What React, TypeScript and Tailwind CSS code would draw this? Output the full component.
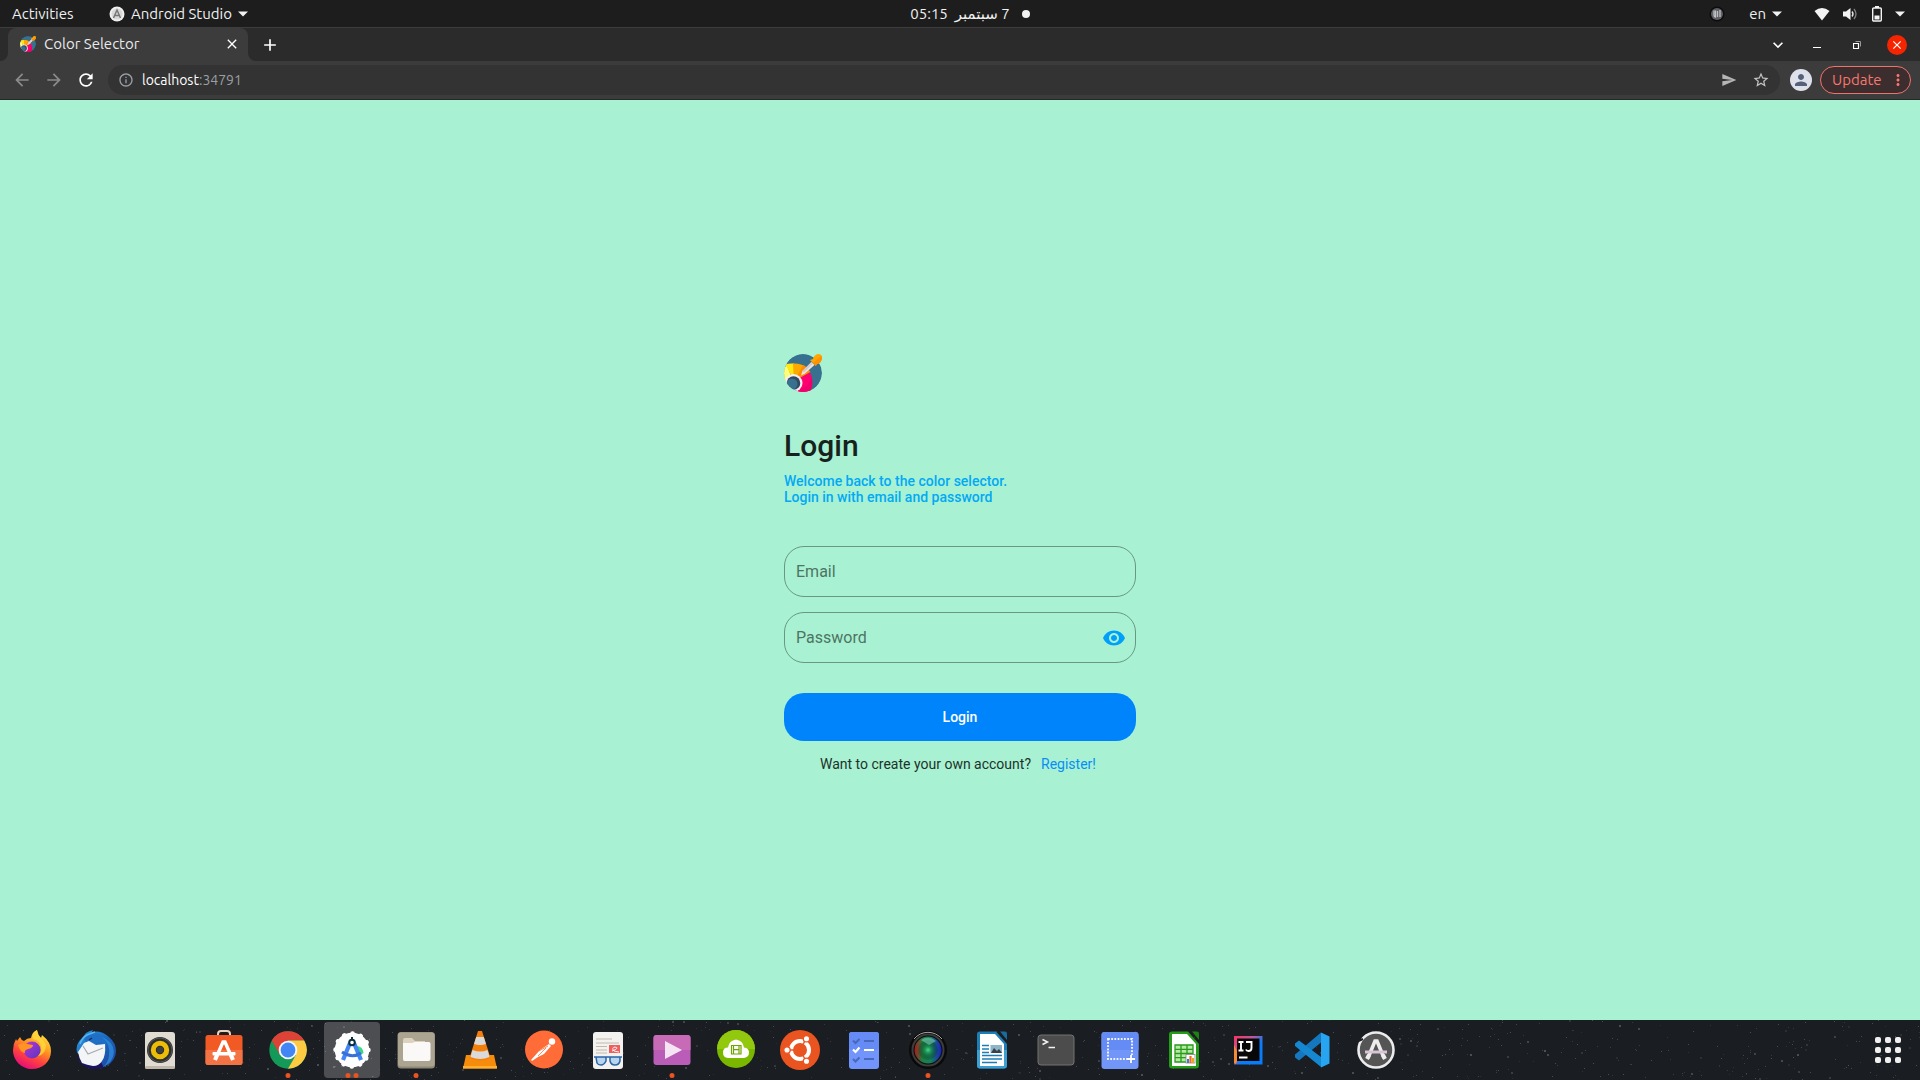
import React from "react";
import { MdArrowBack, MdArrowForward, MdRefresh, MdSend, MdStarBorder, MdInfoOutline, MdClose, MdAdd, MdPerson, MdVisibility, MdKeyboardArrowDown, MdMoreVert } from "react-icons/md";

const uiFont = "font-['Ubuntu','Noto_Sans','DejaVu_Sans',sans-serif]";

function Caret() {
  return (
    <svg viewBox="0 0 10 6" className="h-[6px] w-[10px]" aria-hidden="true">
      <path d="M0 .5h10L5 5.5z" fill="#f2f2f2" />
    </svg>
  );
}

function ColorLogo({ className }: { className: string }) {
  return (
    <svg viewBox="0 0 38 38" className={className} aria-hidden="true">
      <defs>
        <clipPath id="logo-disc"><circle cx="19" cy="19" r="19" /></clipPath>
      </defs>
      <g clipPath="url(#logo-disc)">
        <circle cx="19" cy="19" r="19" fill="#38718f" />
        <path d="M-2 20Q0 14 3 10.500L9 28-2 32z" fill="#fdfd7c" />
        <path d="M1.500 10.500Q5 9 10 9.500V27z" fill="#ffe816" />
        <path d="M9 9.500Q17 9 22 13L10 28z" fill="#ffa800" />
        <path d="M19 11q4 2 7.500 7L10 28z" fill="#ff8c00" />
        <path d="M26 18.500C30 26 28 34 26 38H10V27z" fill="#ff0071" />
        <path d="M27.500 23C29 30 28 34 26 38H12l2-3q10 0 13.500-12z" fill="#f0006b" />
        <circle cx="9.500" cy="29" r="9" fill="#f4f0ef" />
        <circle cx="9.500" cy="29" r="6.800" fill="#33475f" />
        <circle cx="8" cy="30" r="5.500" fill="#38718f" />
      </g>
      <path d="M17 21.500 18.500 17 27.500 8l3 3-9.500 8.500z" fill="#e8e3e4" />
      <path d="m18.500 17 9-9 1.500 1.500-9 9z" fill="#d3c8ca" />
      <path d="m26 6 3-1q1.500-5 6-5 4 1 3 5-1 4-5 5l-1 2z" fill="#ffa700" />
      <path d="m29 9 8-7q2 2 0 5-1 3-5 3.500L31.500 12z" fill="#ff9100" />
    </svg>
  );
}

function TopBar() {
  return (
    <header className="grid h-7 grid-cols-[1fr_auto_1fr] items-center border-b border-[#3d3d3d] bg-[#1d1d1d] text-[15px] leading-5 text-[#f0f0f0]">
      <div className="flex items-center pl-3">
        <button className="w-[97px] text-left">Activities</button>
        <button className="flex items-center gap-1.5">
          <svg viewBox="0 0 16 16" className="size-4" aria-hidden="true">
            <circle cx="8" cy="8" r="7.500" fill="#f0f0f0" />
            <circle cx="8" cy="8" r="5.500" fill="#d8d8d8" />
            <path d="m4.500 12 3.500-8 3.500 8M5 9.500h6" fill="none" stroke="#777" strokeWidth="1.500" />
          </svg>
          <span>Android Studio</span>
          <Caret />
        </button>
      </div>
      <button className="flex items-center gap-3 pl-5">
        <span dir="rtl" className="whitespace-pre">7 سبتمبر  05:15</span>
        <span className="size-2 rounded-full bg-[#f2f2f2]" />
      </button>
      <div className="flex items-center justify-end pr-[15px]">
        <svg viewBox="0 0 16 16" className="mr-6 size-4" aria-hidden="true">
          <circle cx="8" cy="8" r="7.500" fill="#0c0c0e" />
          <circle cx="8" cy="8" r="6" fill="#5f6064" />
          <path d="M5 4.500v4.500q0 2 1.500 2V4.500M8.500 5v6M11 4v7" fill="none" stroke="#bfc0c3" strokeWidth="1.300" />
        </svg>
        <button className="mr-8 flex items-center gap-1.5">en <Caret /></button>
        <button className="flex items-center" aria-label="System menu">
          <svg viewBox="0 0 16 14" className="mr-3 h-3.5 w-4" aria-hidden="true"><path d="M8 13.500.5 4Q8-2 15.500 4z" fill="#f4f4f4" /></svg>
          <svg viewBox="0 0 16 16" className="mr-3.5 size-4" aria-hidden="true">
            <path d="M1 5.500h3L8.500 2v12L4 10.500H1z" fill="#f4f4f4" />
            <path d="M10 5.500q2 2.500 0 5" fill="none" stroke="#e6e6e6" strokeWidth="1.400" />
            <path d="M12 3q4 5 0 10" fill="none" stroke="#808080" strokeWidth="1.300" />
          </svg>
          <svg viewBox="0 0 10 16" className="mr-[13px] h-4 w-2.5" aria-hidden="true">
            <rect x="3" y="0" width="4" height="2" fill="#f4f4f4" />
            <rect x=".7" y="2" width="8.600" height="13" rx="1" fill="none" stroke="#f4f4f4" strokeWidth="1.400" />
            <rect x="2.500" y="9.500" width="5" height="4" fill="#f4f4f4" />
          </svg>
          <Caret />
        </button>
      </div>
    </header>
  );
}

function TabStrip() {
  return (
    <div className="flex h-[33px] items-center bg-[#2b2b2b] text-white">
      <div className="flex h-full w-2 items-end bg-[#3c3c3c]"><span className="h-full w-2 rounded-br-lg bg-[#2b2b2b]" /></div>
      <div className="flex h-full w-60 items-center rounded-t-lg bg-[#3c3c3c] pr-2 pb-px pl-3">
        <ColorLogo className="size-4" />
        <span className="ml-2 flex-1 text-[15px] leading-5 text-[#e9eaec]">Color Selector</span>
        <button aria-label="Close tab"><MdClose className="size-4" /></button>
      </div>
      <div className="h-full w-2 bg-[#3c3c3c]"><div className="size-full rounded-bl-lg bg-[#2b2b2b]" /></div>
      <button className="ml-1" aria-label="New tab"><MdAdd className="size-5" /></button>
      <div className="ml-auto flex items-center pr-[13px]">
        <button className="mr-[25px]" aria-label="Search tabs"><MdKeyboardArrowDown className="size-5" /></button>
        <button className="mr-8 flex h-5 items-center" aria-label="Minimize"><span className="mt-[5px] h-px w-2 bg-white" /></button>
        <button className="mr-[26px]" aria-label="Restore">
          <svg viewBox="0 0 8 8" className="size-2" fill="none" aria-hidden="true">
            <path d="M2.500.5h5v5" stroke="#999" />
            <path d="M.5 2.500h5v5h-5z" stroke="#fff" strokeWidth="1.200" />
          </svg>
        </button>
        <button className="grid size-5 place-items-center rounded-full bg-[#f52502]" aria-label="Close window"><MdClose className="size-3.5" /></button>
      </div>
    </div>
  );
}

function Toolbar() {
  return (
    <div className="flex h-[39px] items-center border-b border-[#262626] bg-[#3c3c3c] pr-[9px] pl-3">
      <button className="mr-3" aria-label="Back"><MdArrowBack className="size-5 text-[#8b8b8b]" /></button>
      <button className="mr-3" aria-label="Forward"><MdArrowForward className="size-5 text-[#8b8b8b]" /></button>
      <button className="mr-3" aria-label="Reload"><MdRefresh className="size-5 text-white" /></button>
      <div className="flex h-[30px] flex-1 items-center rounded-full bg-[#333333] px-2.5">
        <MdInfoOutline className="mr-2 size-4 text-[#9aa0a6]" />
        <a href="#address" className="flex-1 text-[14px] leading-5 text-[#9a9fa3]"><span className="text-white">localhost</span>:34791</a>
        <button className="mr-[15px]" aria-label="Share"><MdSend className="size-4 text-[#b5b5b5]" /></button>
        <button aria-label="Bookmark"><MdStarBorder className="size-[18px] text-[#c4c4c4]" /></button>
      </div>
      <button className="mr-2 ml-[10px] grid size-[22px] place-items-center rounded-full bg-[#dee1e9]" aria-label="Profile"><MdPerson className="size-[18px] text-[#566078]" /></button>
      <button className="flex h-7 w-[91px] items-center justify-between rounded-full border border-[#f0736b] bg-[#3c2e2e] pr-[3px] pl-[11px] text-[15px] leading-5 text-[#f6786f]">
        Update <MdMoreVert className="size-[18px]" />
      </button>
    </div>
  );
}

function LoginForm() {
  const field = "flex h-[51px] items-center rounded-[20px] border border-[#699782] pl-[11px]";
  const input = "min-w-0 flex-1 bg-transparent text-[16px] leading-5 outline-none placeholder:text-[#4e7463] placeholder:opacity-100";
  return (
    <form className="flex w-[352px] flex-col" onSubmit={(e) => e.preventDefault()}>
      <ColorLogo className="size-[38px]" />
      <h1 className="mt-9 text-[30px] leading-9 font-medium text-[#17221d]">Login</h1>
      <p className="mt-[9px] text-[14px] leading-4 font-medium text-[#03a9f4]">
        Welcome back to the color selector.<br />Login in with email and password
      </p>
      <label className={`mt-[41px] ${field}`}>
        <input type="email" placeholder="Email" aria-label="Email" className={input} />
      </label>
      <div className={`mt-[15px] ${field} pr-[9px]`}>
        <input type="password" placeholder="Password" aria-label="Password" className={input} />
        <button type="button" aria-label="Show password"><MdVisibility className="size-6 text-[#00a0fa]" /></button>
      </div>
      <button type="submit" className="mt-[30px] h-12 rounded-[20px] bg-[#0084fb] text-[14px] leading-4 font-medium text-white">Login</button>
      <p className="mt-[15px] flex gap-2.5 pl-9 text-[14px] leading-4 text-[#1e3129]">
        <span>Want to create your own account?</span>
        <a href="#register" className="text-[#0a8df5]">Register!</a>
      </p>
    </form>
  );
}

const stars = Array.from({ length: 760 }, (_, i) => {
  const r = (n: number) => {
    const v = Math.sin(i * 12.9898 + n * 78.233) * 43758.5453;
    return v - Math.floor(v);
  };
  return { x: Math.floor(r(1) * 1920), y: Math.floor(r(2) * 60), s: r(3) > 0.85 ? 2 : 1, o: 0.12 + r(4) * 0.32 };
});

type App = { name: string; dots?: number; active?: boolean; art: React.ReactNode };

const apps: App[] = [
  { name: "Firefox", art: <>
    <defs>
      <linearGradient id="ff1" x1=".8" y1="0" x2=".3" y2="1"><stop offset="0" stopColor="#fff04a" /><stop offset=".4" stopColor="#ff9a1f" /><stop offset=".7" stopColor="#ff4040" /><stop offset="1" stopColor="#e5097f" /></linearGradient>
      <linearGradient id="ff2" x1="0" y1="0" x2="1" y2="1"><stop offset="0" stopColor="#b833e1" /><stop offset="1" stopColor="#5a36b8" /></linearGradient>
    </defs>
    <path d="M20 17q1 3 4 4 3-3 7-3Q32 12 37 10q1 5 4 8l1-3q9 7 9 16c0 11-9 18-19 18S13 41 13 30q0-6 3-11l1 2z" fill="url(#ff1)" />
    <circle cx="32" cy="30" r="8.500" fill="url(#ff2)" />
    <path d="M18 25q4-3 9-1l6 1q0 3-5 4-4 1-3 4-5-1-7-8z" fill="#ff9422" />
    <path d="M33 19q7 1 8 8 1 6-3 9 8-2 8-11-2-4-5-7-4-3-4-8-6 4-4 9z" fill="#ffd63b" opacity=".85" />
  </> },
  { name: "Thunderbird", art: <>
    <defs><linearGradient id="tb" x1="0" y1="0" x2="1" y2="1"><stop offset="0" stopColor="#2f9be0" /><stop offset=".5" stopColor="#1a67bd" /><stop offset="1" stopColor="#21409c" /></linearGradient></defs>
    <path d="M13 33q-2-9 5-15l4-5q3-2 7-3l-1 2q9-2 17 5 7 6 7 14 0 9-9 15l1-3q-3 4-8 6l1-2z" fill="url(#tb)" />
    <path d="M13 37q4 10 15 12l12-1-3-6z" fill="#1b1560" />
    <path d="M20 19q5-8 15-5 9 4 7 13l-5-5-13 2z" fill="#1f6fc6" />
    <path d="M38 17q9 7 7 19-1 7-6 11 10-4 11-15-1-11-12-15z" fill="#2e8bdb" opacity=".8" />
    <path d="M14 32 20 23l5-2 7 4 9-1q1 12-3 17-3 5-9 5-6-1-11-3-3-5-4-11z" fill="#f4f5f7" />
    <path d="m19 26 5 8 15-6" fill="none" stroke="#a9abb1" strokeWidth="1.200" />
    <path d="M16 24q2-6 7-9l8-3" fill="none" stroke="#55b4f0" strokeWidth="1.600" />
    <path d="m25 20 3-2" stroke="#142f68" strokeWidth="1.500" />
  </> },
  { name: "Rhythmbox", art: <>
    <rect x="17" y="12" width="30" height="37" rx="3" fill="#e0dcd1" />
    <rect x="17" y="46" width="30" height="3" rx="1.500" fill="#bdb8aa" />
    <circle cx="32" cy="30" r="13" fill="#2d2e30" /><circle cx="32" cy="30" r="12" fill="none" stroke="#666" strokeWidth=".7" />
    <circle cx="32" cy="30" r="6.700" fill="#252525" stroke="#ecbd08" strokeWidth="5" />
    <circle cx="32" cy="30" r="3.500" fill="#3d3d3d" />
  </> },
  { name: "Ubuntu Software", art: <>
    <path d="M26 16v-2q0-3 3-3h6q3 0 3 3v2" fill="none" stroke="#e9d3c0" strokeWidth="2" />
    <rect x="13.500" y="15" width="37" height="30" rx="2.500" fill="#f15a24" /><path d="M13.500 30h37v13q0 2-2.500 2H16q-2.500 0-2.500-2z" fill="#f47345" />
    <path d="m24 38 7-16h2l7 16" fill="none" stroke="#fff" strokeWidth="3.400" />
    <rect x="20.500" y="32" width="23" height="3.500" rx="1" fill="#fff" /><path d="m25 35-2 5M39 35l2 5" stroke="#fff" strokeWidth="4" />
  </> },
  { name: "Google Chrome", dots: 1, art: <>
    <circle cx="32" cy="30" r="18.700" fill="#159958" />
    <path d="M15.800 20.600A18.700 18.700 0 0 1 48.200 20.600H32L23.900 34.700z" fill="#dd4236" />
    <path d="M48.200 20.600A18.700 18.700 0 0 1 32 48.700L40.100 34.700 32 20.600z" fill="#fdcb42" />
    <circle cx="32" cy="30" r="9.300" fill="#f5f5f5" /><circle cx="32" cy="30" r="7.400" fill="#4285f4" />
  </> },
  { name: "Android Studio", dots: 2, active: true, art: <>
    <circle cx="32" cy="30" r="17.300" fill="#fff" />
    <circle cx="32" cy="30" r="16.500" fill="none" stroke="#fff" strokeWidth="4.500" strokeDasharray="0.100 8.540" strokeLinecap="round" />
    <path d="M36 26q7 0 7.500 7L37 37z" fill="#3bd884" />
    <path d="m30 23-7 17M34 23l7 17" stroke="#4285f4" strokeWidth="4.200" />
    <path d="M22 32q10 7 19 1" fill="none" stroke="#3871d4" strokeWidth="3" />
    <path d="M32 17v4" stroke="#073042" strokeWidth="2" /><circle cx="32" cy="22.500" r="2.800" fill="#fff" stroke="#073042" strokeWidth="2" />
  </> },
  { name: "Files", dots: 1, art: <>
    <rect x="13.500" y="12" width="37.500" height="36.500" rx="3.500" fill="#8f8877" /><rect x="14" y="12.500" width="36.500" height="34" rx="3" fill="#aaa490" />
    <path d="M19 20q0-2 2-2h7l3 3h10v8H19z" fill="#dcd2bd" />
    <path d="M19 23h9l3-1h14q1.500 0 1.500 2v15q0 2-2 2h-24q-1.500 0-1.500-2z" fill="#faf9f7" />
  </> },
  { name: "VLC", art: <>
    <path d="M18 35h28l3 13.500H15z" fill="#f68b0c" /><path d="M15 46h34v2.500H15z" fill="#ffb02e" />
    <path d="M30 11h4l8.500 27q-10 5-21 0z" fill="#f4800a" />
    <path d="M28.200 17h7.600l2.200 7q-6 2-12 0zM24.500 30q8 3 15 0l2 7q-9 4-19 0z" fill="#dadada" />
  </> },
  { name: "Postman", art: <>
    <circle cx="32" cy="29.500" r="19" fill="#ff6c37" />
    <circle cx="40" cy="21.500" r="3.200" fill="#fff" /><path d="m37 24 2 2-7 8-6 3-6 4-1-1 9-10z" fill="#fff" />
    <path d="m27 31 9-5M26 36l8-8" stroke="#ff6c37" strokeWidth=".8" />
  </> },
  { name: "Document Viewer", art: <>
    <rect x="17" y="12" width="30" height="37" rx="3" fill="#f4f2ef" /><path d="M20 19h16M20 23h23M20 26.500h11M20 30h11M20 33h11" stroke="#c0b9ac" />
    <rect x="33" y="25" width="11" height="8" fill="#ee5f5f" /><path d="M36 31q8-3 3-4-4 1-1 4l5 1" fill="none" stroke="#fff" strokeWidth=".9" />
    <path d="M18 37h28M20 37l1 6q1 2 4 2t5-4v-4M34 37v4q1 4 5 4 4 0 5-4v-4" fill="#b9d5ee" stroke="#2a64a8" strokeWidth="1.500" />
  </> },
  { name: "Videos", dots: 1, art: <>
    <rect x="13.500" y="15" width="37" height="30" rx="3" fill="#b95db9" /><path d="M13.500 30V18q0-3 3-3H47q3.500 0 3.500 3v12z" fill="#c76bb7" />
    <path d="m25 21 17 9-17 9z" fill="#f5e5f4" />
  </> },
  { name: "Video Downloader", art: <>
    <circle cx="32" cy="29" r="19" fill="#7ab800" /><path d="M13 29a19 19 0 0 1 38 0z" fill="#92c80e" />
    <path d="M24 38q-5-.500-5-5.500t5-5q1-7 8-8 7 1 8 8 5 .500 5 5t-5 5.500z" fill="#fff" />
    <path d="M27.500 25.500h9.500v8.500h-9.500zM29.500 25.500v8.500M35 25.500v8.500M29.500 29.700H35" fill="none" stroke="#6fa500" strokeWidth="1.200" />
  </> },
  { name: "Ubuntu", art: <>
    <circle cx="32" cy="30" r="20" fill="#e95420" /><circle cx="32" cy="30" r="9" fill="none" stroke="#fff" strokeWidth="4" />
    <path d="m32 30 6-11M32 30l6 11M32 30H19" stroke="#e95420" strokeWidth="1.500" />
    <g fill="#fff" stroke="#e95420" strokeWidth="1.300"><circle cx="19" cy="30" r="3.200" /><circle cx="38.500" cy="18.700" r="3.200" /><circle cx="38.500" cy="41.300" r="3.200" /></g>
  </> },
  { name: "To Do", art: <>
    <rect x="17" y="12" width="30" height="37" rx="3" fill="#7295fb" /><rect x="17" y="12" width="30" height="18" rx="3" fill="#658bf7" />
    <path d="m21 20.500 2.500 2.500 4-4M32 21h10M21 39l2.500 2.500 4-4M32 39h10" fill="none" stroke="#4968ba" strokeWidth="2" />
    <path d="m21 29.500 2.500 2.500 4-4.500M32 30h10" fill="none" stroke="#fff" strokeWidth="2.200" />
  </> },
  { name: "Camera", dots: 1, art: <>
    <defs>
      <linearGradient id="lens"><stop offset="0" stopColor="#b0171b" /><stop offset=".3" stopColor="#1c8043" /><stop offset=".6" stopColor="#14805b" /><stop offset="1" stopColor="#1b1fc0" /></linearGradient>
      <radialGradient id="lensglow"><stop offset="0" stopColor="#42e08a" /><stop offset=".5" stopColor="#12703e" stopOpacity=".5" /><stop offset="1" stopColor="#000" stopOpacity=".1" /></radialGradient>
    </defs>
    <circle cx="32" cy="30" r="19" fill="#0a0a0a" /><circle cx="32" cy="30" r="15.500" fill="none" stroke="#3c3c3c" strokeWidth="2" /><path d="M18 19a18 18 0 0 1 28 0" fill="none" stroke="#a5a5a5" />
    <circle cx="32" cy="30" r="13.500" fill="url(#lens)" /><circle cx="32" cy="30" r="10" fill="url(#lensglow)" />
    <path d="M25 20q8-5 15 1l-7 4z" fill="#9ee3d2" opacity=".45" />
  </> },
  { name: "LibreOffice Writer", art: <>
    <path d="M20 11.500h16L47 24v21q0 3.500-3 3.500H20q-3 0-3-3V14q0-2.500 3-2.500z" fill="#1d7db5" /><path d="M17 30h30v15q0 3.500-3 3.500H20q-3 0-3-3z" fill="#3ba0d2" />
    <path d="M40 11.500h5q2 0 2 2V20z" fill="#186c9f" /><path d="M20 14h15l9 10v22H20z" fill="#fff" />
    <path d="M22 25.500h7M22 29h7M22 32.500h7M22 35.500h20M22 39h20M22 42.500h15" stroke="#1d7db5" strokeWidth="1.300" />
    <rect x="30.500" y="25" width="11.500" height="8" fill="#8db4c9" /><path d="m31 33 3-5 3 3 2-2 3 4z" fill="#394247" />
  </> },
  { name: "Terminal", art: <>
    <rect x="14" y="15" width="36" height="30" rx="3" fill="#4c4c4c" stroke="#737373" />
    <path d="m18.500 19.500 5 2.500-5 2.500M24.500 27.500H31" fill="none" stroke="#f3f3f3" strokeWidth="1.500" />
  </> },
  { name: "Screenshot", art: <>
    <rect x="13.500" y="12" width="37" height="37" rx="3" fill="#7295f8" /><path d="M13.500 30V15q0-3 3-3h31q3 0 3 3v15z" fill="#658bf5" />
    <path d="M20 19h24v20H20z" fill="none" stroke="#f0f3fd" strokeWidth="2" strokeDasharray="1.800 1.400" />
    <path d="M43 35v8M39 39h8" stroke="#658bf5" strokeWidth="4" /><path d="M43 35v8M39 39h8" stroke="#fff" strokeWidth="1.800" />
  </> },
  { name: "LibreOffice Calc", art: <>
    <path d="M20 11.500h16L47 24v21q0 3.500-3 3.500H20q-3 0-3-3V14q0-2.500 3-2.500z" fill="#279b1a" /><path d="M40 11.500h5q2 0 2 2V20z" fill="#1c8212" />
    <path d="M20 14h15l9 10v22H20z" fill="#fff" />
    <rect x="23" y="25" width="18" height="17" fill="#b7e8a5" /><path d="M23 25h18v17H23zM23 29.300h18M23 33.500h18M23 37.700h18M29 25v17M35 25v17" fill="none" stroke="#279b1a" strokeWidth="1.300" />
    <rect x="34" y="34.500" width="9" height="8.500" fill="#fff" stroke="#888" strokeWidth=".8" /><path d="M36 43v-4" stroke="#2b82d0" strokeWidth="2" /><path d="M38.500 43v-7" stroke="#f26b21" strokeWidth="2.200" /><path d="M41 43v-5" stroke="#e7a720" strokeWidth="2" />
  </> },
  { name: "IntelliJ IDEA", art: <>
    <defs><linearGradient id="ij" x1="0" y1="0" x2="1" y2="1"><stop offset="0" stopColor="#fe3262" /><stop offset=".35" stopColor="#b95a9a" /><stop offset=".6" stopColor="#087cfa" /></linearGradient></defs>
    <path d="M18 16h28.500v28.500H18z" fill="url(#ij)" /><path d="m18 25 5 10-3 9-2-1z" fill="#f98a32" />
    <rect x="21" y="18.500" width="22.500" height="22.500" fill="#080808" />
    <path d="M22.500 22h5M25 22v8M22.500 30.500h5M30 22h5.500v6q0 3-3 3-2 0-2.500-1.500M23 37.500h8.500" fill="none" stroke="#fff" strokeWidth="1.900" />
  </> },
  { name: "Visual Studio Code", art: <>
    <path d="M41 12.500v10L19 40.500l-4-3v-3z" fill="#1577bd" /><path d="m15 23.500 4-3L41 37v10L15 26z" fill="#1688d2" />
    <path d="m41 12.500 8.500 4v27l-8.500 4V23z" fill="#28a5f1" />
  </> },
  { name: "Software Updater", art: <>
    <circle cx="32" cy="30" r="17.500" fill="#555" stroke="#ececec" strokeWidth="2.600" />
    <path d="m12 22 7-3M44 46l6-5" stroke="#1a1d21" strokeWidth="2" />
    <path d="m24 38 7-17h2l7 17" fill="none" stroke="#ededed" strokeWidth="3.600" /><path d="M21 32h22" stroke="#d7c5d6" strokeWidth="3" /><path d="m25 35-2 4M39 35l2 4" stroke="#ededed" strokeWidth="4" />
  </> },
];

function Dock() {
  return (
    <nav className="relative flex h-[60px] items-center justify-between bg-[#1a1d21]" aria-label="Dock">
      <svg viewBox="0 0 1920 60" preserveAspectRatio="xMidYMid slice" className="absolute inset-0 size-full" aria-hidden="true">
        {stars.map((s, i) => <rect key={i} x={s.x} y={s.y} width={s.s} height={s.s} fill="#8b91a0" opacity={s.o} />)}
      </svg>
      <div className="relative flex">
        {apps.map((app) => (
          <button key={app.name} aria-label={app.name} className="grid h-[60px] w-16 place-items-center">
            <svg viewBox="0 0 64 60" className="h-[60px] w-16" aria-hidden="true">
              {app.active && <rect x="4" y="2" width="56" height="56" rx="4" fill="#fff" opacity=".22" />}
              {app.art}
              {app.dots === 1 && <circle cx="32" cy="55.500" r="2.500" fill="#e95420" />}
              {app.dots === 2 && <><circle cx="28" cy="55.500" r="2.500" fill="#e95420" /><circle cx="36" cy="55.500" r="2.500" fill="#e95420" /></>}
            </svg>
          </button>
        ))}
      </div>
      <button className="relative mr-[19px] grid grid-cols-3 gap-1" aria-label="Show applications">
        {Array.from({ length: 9 }, (_, i) => <span key={i} className="size-1.5 rounded-[2px] bg-[#f0f0ee]" />)}
      </button>
    </nav>
  );
}

export default function App() {
  return (
    <div className={`flex min-h-screen flex-col bg-[#a8f2d3] ${uiFont}`}>
      <TopBar />
      <TabStrip />
      <Toolbar />
      <main className="flex flex-1 items-center justify-center pt-1.5 font-['Roboto',sans-serif]">
        <LoginForm />
      </main>
      <Dock />
    </div>
  );
}
